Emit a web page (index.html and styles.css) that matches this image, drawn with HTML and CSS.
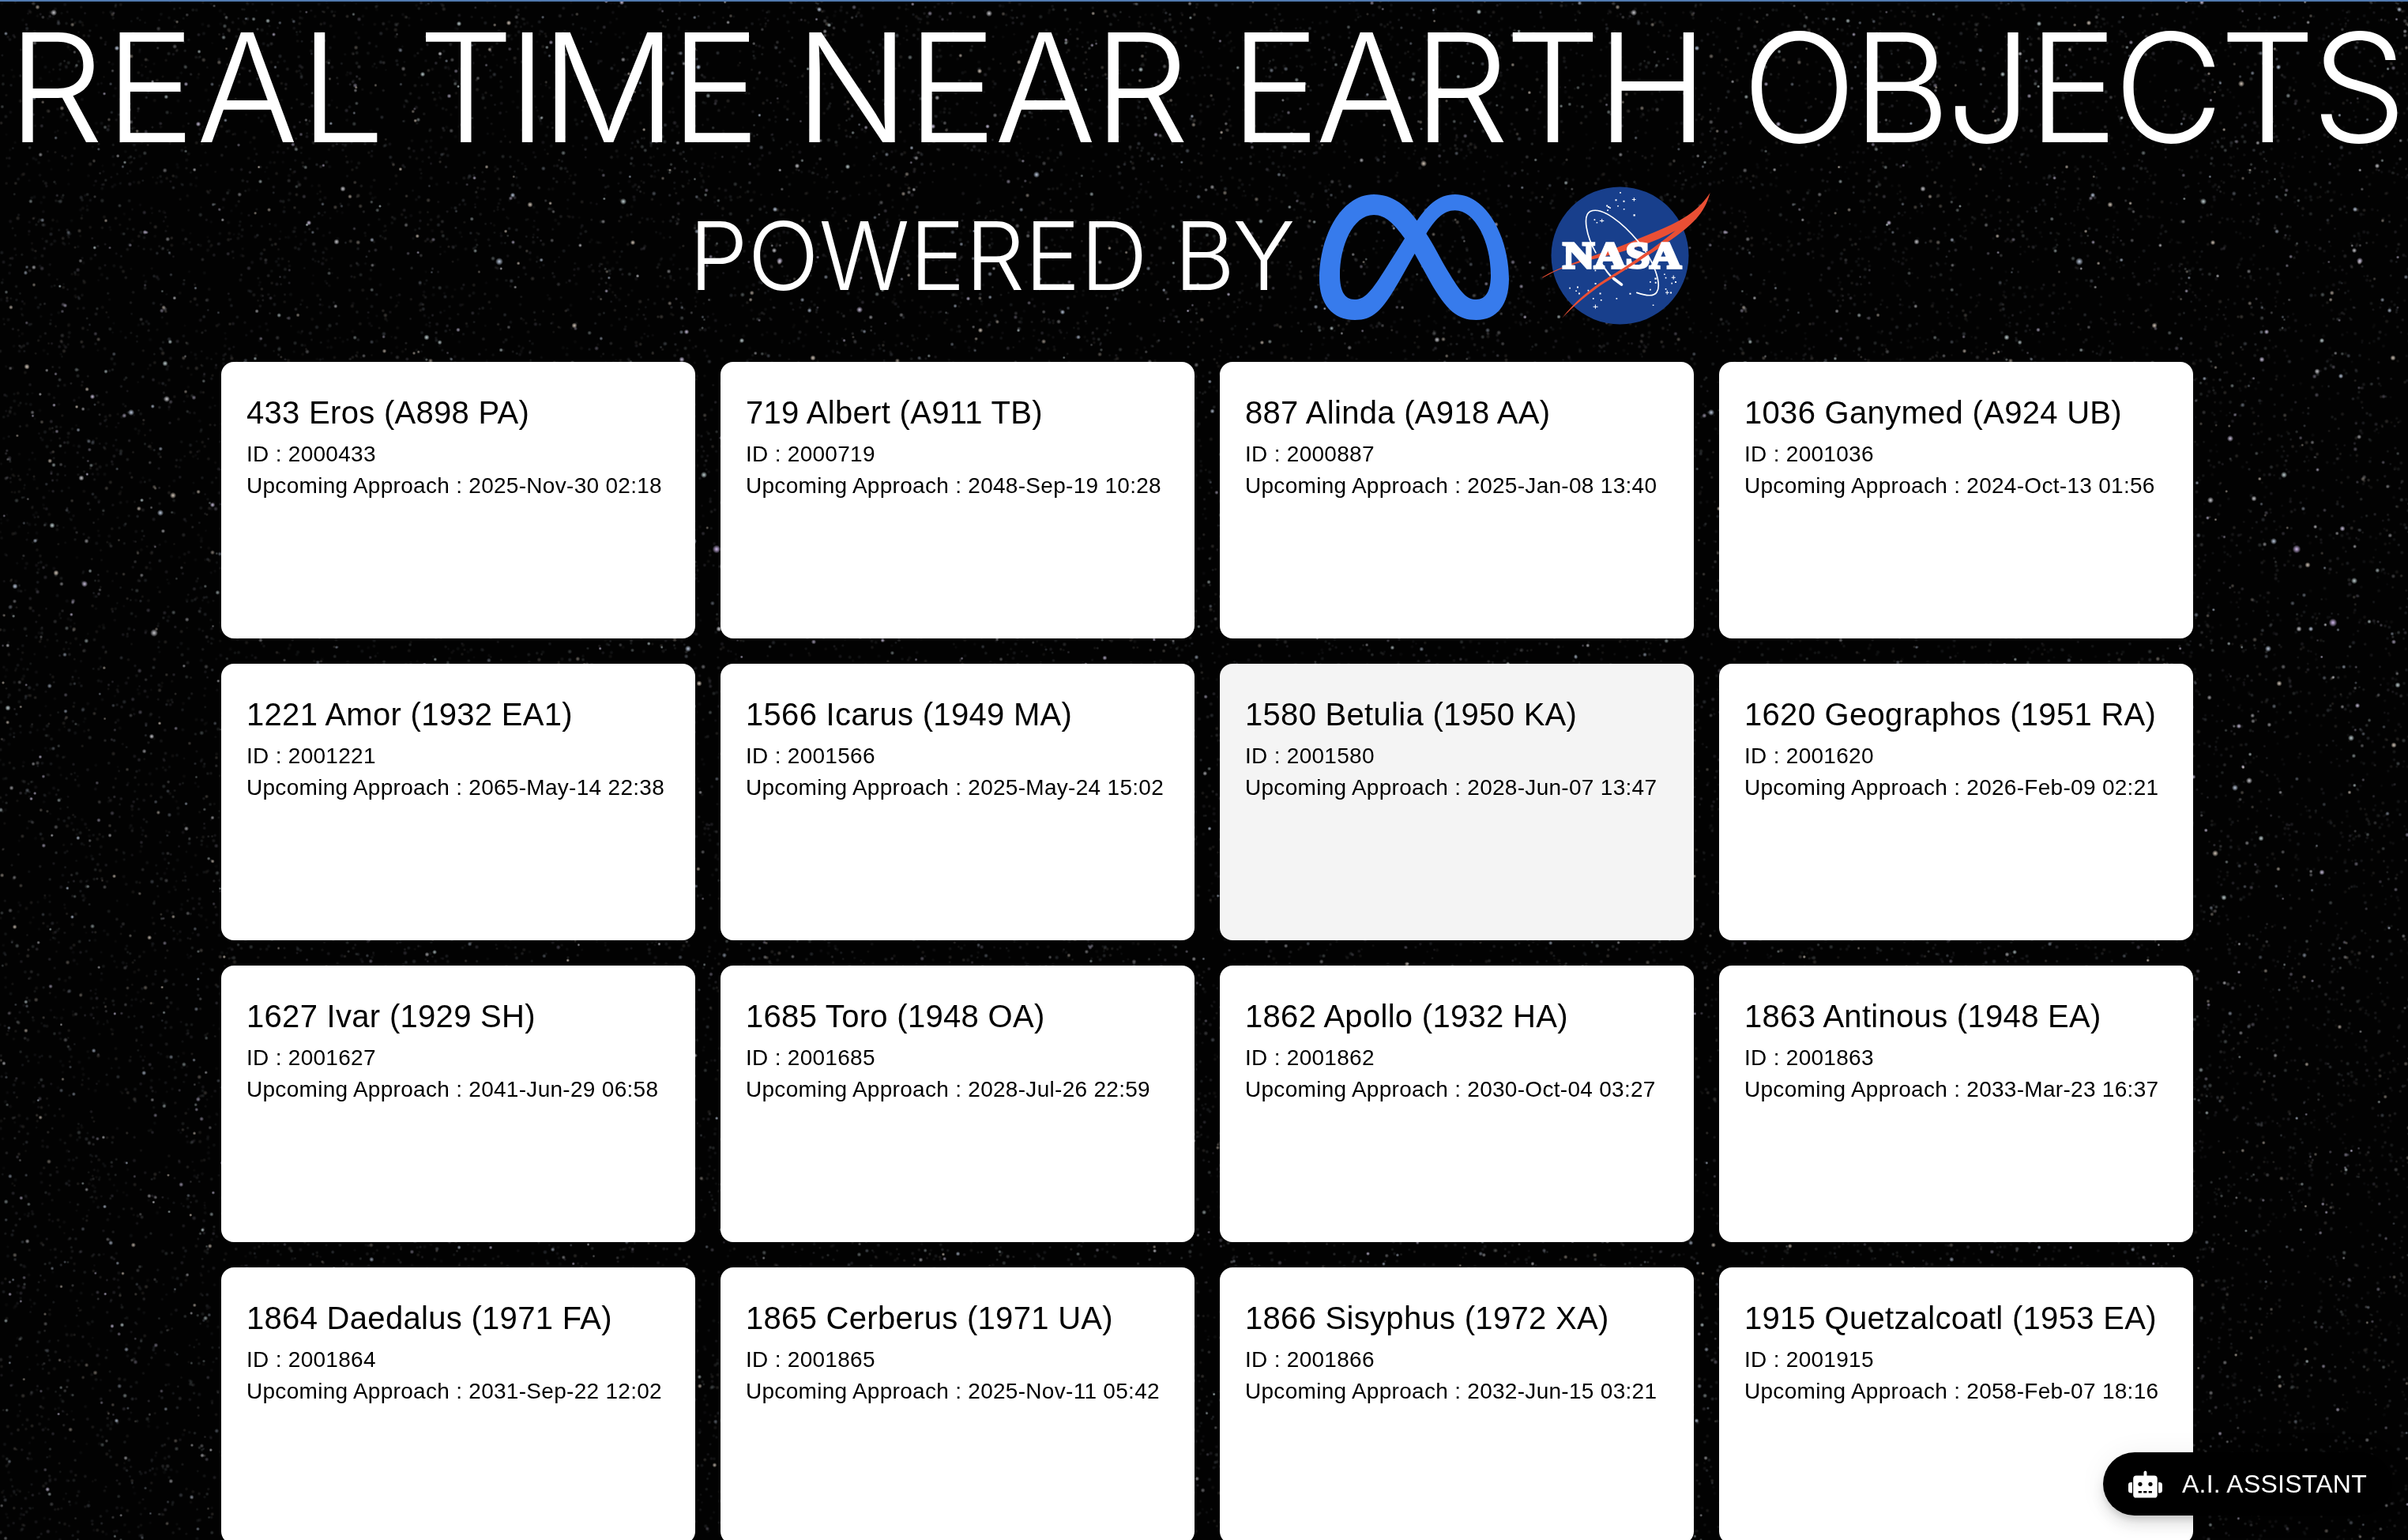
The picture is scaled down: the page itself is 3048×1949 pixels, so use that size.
FILE: index.html
```html
<!DOCTYPE html>
<html lang="en">
<head>
<meta charset="utf-8">
<title>Real Time Near Earth Objects</title>
<link rel="stylesheet" href="styles.css">
</head>
<body>
<canvas class="sky" width="3048" height="1949"></canvas>
<div class="page">
  <header class="header">
    <h1 class="title"><span class="w1">REAL</span><span class="w2">TIME</span><span class="w3">NEAR</span><span class="w4">EARTH</span><span class="w5">OBJECTS</span></h1>
    <div class="powered">
      <h2 class="powered-text"><span class="p1">POWERED</span><span class="p2">BY</span></h2>
      <svg class="meta" viewBox="0 0 240 159" aria-label="Meta"><path fill="#377bec" fill-rule="evenodd" d="M69 0C91 0 108 12 123.6 33.3C138 12 152 0 171.8 0C212 0 240 55 240 107C240 139 225 159 198.6 159C175 159 161 147 140 110L120.7 75L101 110C79 148 68 159 45 159C17 159 0 139 0 107C0 52 28 0 69 0ZM69 26C42 26 26 66 26 102C26 122 32 133 44.3 133C56 133 63 127 82 97L108 55.700C95 38 84 26 69 26ZM135.400 49.700C146 33 156 20.300 171.800 20.300C197 20.300 217 60 217 102C217 122 211 133 198.600 133C187 133 180 126 162 96C152 79 145 64 135.400 49.700Z"/></svg>
      <svg class="nasa" viewBox="36 48 640 526" aria-label="NASA">
        <circle cx="332" cy="311" r="261.500" fill="#183f8c"/>
        <path fill="#ea4f34" d="M37 393C140 332 300 296 405 246C520 198 615 165 675 72C650 165 590 205 500 270C430 318 350 366 285 407C210 455 160 500 111 549C160 487 215 440 285 396C380 340 470 275 543 216C450 268 330 300 240 322C150 342 90 365 37 396Z"/>
        <g fill="none" stroke="#fff" stroke-linecap="round">
          <path stroke-width="5" d="M240 300C205 238 188 158 219 143C262 122 342 186 402 258C462 330 492 420 472 450C461 468 425 462 396 452"/>
          <path stroke-width="6" d="M262 340C280 372 300 396 320 408"/>
          <path stroke-width="11" d="M309 399L338 421"/>
        </g>
        <text class="nasa-text" x="115" y="357" textLength="450" lengthAdjust="spacingAndGlyphs">NASA</text>
        <path fill="#ea4f34" d="M285 396C340 363 395 326 440 294L446 303C400 336 340 373 285 407Z"/>
        <g fill="#fff">
          <path d="M331 69h5v5h-5zM314 97h6v6h-6zM344 101h6v6h-6zM322 120h5v5h-5zM345 132h5v5h-5zM383 154h7v7h-7zM280 119h6v6h-6zM286 123h6v6h-6zM292 127h5v5h-5zM283 136h5v5h-5zM233 172h5v5h-5zM242 183h5v5h-5zM139 432h5v5h-5zM168 428h6v6h-6zM163 443h5v5h-5zM174 452h6v6h-6zM209 441h5v5h-5zM236 415h6v6h-6zM236 365h5v5h-5zM254 452h6v6h-6zM228 472h5v5h-5zM258 478h5v5h-5zM317 472h5v5h-5zM368 453h6v6h-6zM445 409h5v5h-5zM445 438h5v5h-5zM464 395h7v7h-7zM465 411h6v6h-6zM499 380h5v5h-5zM504 393h5v5h-5zM541 409h6v6h-6zM527 414h5v5h-5zM504 436h5v5h-5zM523 449h6v6h-6zM456 497h5v5h-5z"/>
          <path d="M378 96h14v3h-14zM384 90h3v14h-3zM255 177h16v3h-16zM262 171h3v14h-3zM230 504h18v3h-18zM237 497h3v16h-3zM528 393h15v3h-15zM534 386h3v16h-3zM505 450h14v3h-14zM510 443h3v16h-3z"/>
        </g>
      </svg>
    </div>
  </header>
  <main class="grid">
    <article class="card"><h3>433 Eros (A898 PA)</h3><p>ID : 2000433</p><p>Upcoming Approach : 2025-Nov-30 02:18</p></article>
    <article class="card"><h3>719 Albert (A911 TB)</h3><p>ID : 2000719</p><p>Upcoming Approach : 2048-Sep-19 10:28</p></article>
    <article class="card"><h3>887 Alinda (A918 AA)</h3><p>ID : 2000887</p><p>Upcoming Approach : 2025-Jan-08 13:40</p></article>
    <article class="card"><h3>1036 Ganymed (A924 UB)</h3><p>ID : 2001036</p><p>Upcoming Approach : 2024-Oct-13 01:56</p></article>
    <article class="card"><h3>1221 Amor (1932 EA1)</h3><p>ID : 2001221</p><p>Upcoming Approach : 2065-May-14 22:38</p></article>
    <article class="card"><h3>1566 Icarus (1949 MA)</h3><p>ID : 2001566</p><p>Upcoming Approach : 2025-May-24 15:02</p></article>
    <article class="card card-active"><h3>1580 Betulia (1950 KA)</h3><p>ID : 2001580</p><p>Upcoming Approach : 2028-Jun-07 13:47</p></article>
    <article class="card"><h3>1620 Geographos (1951 RA)</h3><p>ID : 2001620</p><p>Upcoming Approach : 2026-Feb-09 02:21</p></article>
    <article class="card"><h3>1627 Ivar (1929 SH)</h3><p>ID : 2001627</p><p>Upcoming Approach : 2041-Jun-29 06:58</p></article>
    <article class="card"><h3>1685 Toro (1948 OA)</h3><p>ID : 2001685</p><p>Upcoming Approach : 2028-Jul-26 22:59</p></article>
    <article class="card"><h3>1862 Apollo (1932 HA)</h3><p>ID : 2001862</p><p>Upcoming Approach : 2030-Oct-04 03:27</p></article>
    <article class="card"><h3>1863 Antinous (1948 EA)</h3><p>ID : 2001863</p><p>Upcoming Approach : 2033-Mar-23 16:37</p></article>
    <article class="card"><h3>1864 Daedalus (1971 FA)</h3><p>ID : 2001864</p><p>Upcoming Approach : 2031-Sep-22 12:02</p></article>
    <article class="card"><h3>1865 Cerberus (1971 UA)</h3><p>ID : 2001865</p><p>Upcoming Approach : 2025-Nov-11 05:42</p></article>
    <article class="card"><h3>1866 Sisyphus (1972 XA)</h3><p>ID : 2001866</p><p>Upcoming Approach : 2032-Jun-15 03:21</p></article>
    <article class="card"><h3>1915 Quetzalcoatl (1953 EA)</h3><p>ID : 2001915</p><p>Upcoming Approach : 2058-Feb-07 18:16</p></article>
  </main>
</div>
<button class="assistant" type="button">
  <svg class="robot" viewBox="72 48 132 105" aria-hidden="true"><path fill="#fff" fill-rule="evenodd" d="M138 48a6 6 0 0 1 6 6v13h29a12 12 0 0 1 12 12v62a12 12 0 0 1-12 12h-70a12 12 0 0 1-12-12v-62a12 12 0 0 1 12-12h29v-13a6 6 0 0 1 6-6zM118 92a8 8 0 1 0 0 16a8 8 0 1 0 0-16zM158 92a8 8 0 1 0 0 16a8 8 0 1 0 0-16zM111 127v7h13v-7zM131 127v7h13v-7zM151 127v7h13v-7zM87 93v41h-5a10 10 0 0 1-10-10v-21a10 10 0 0 1 10-10zM189 93h5a10 10 0 0 1 10 10v21a10 10 0 0 1-10 10h-5z"/></svg>
  <span>A.I. ASSISTANT</span>
</button>
<script src="stars.js"></script>
</body>
</html>
```
FILE: styles.css
```css
* { box-sizing: border-box; margin: 0; }
html, body { height: 1949px; overflow: hidden; }
body { background: #020202; color: #fff; font-family: "Liberation Sans", Arial, sans-serif; }
.sky { position: fixed; inset: 0; z-index: -1; border-bottom: 1px solid #333; }
.page { border-top: 2px solid #5079b0; height: 1949px; overflow: hidden; }

.header { height: 456px; font-family: Inter, sans-serif; }
.title { display: flex; font-size: 191px; line-height: 217px; font-weight: 300; padding-left: 10px; white-space: nowrap; }
.title span, .powered-text span { display: block; flex: none; }
.w1 { width: 519px; letter-spacing: 2px; }
.w2 { width: 477px; letter-spacing: -8px; }
.w3 { width: 551px; letter-spacing: -3px; }
.w4 { width: 648px; letter-spacing: -5.200px; }
.w5 { letter-spacing: -5.100px; }
.powered { display: flex; align-items: center; height: 209px; padding-left: 872px; }
.powered-text { display: flex; width: 798px; font-size: 119px; line-height: 140px; font-weight: 300; white-space: nowrap; }
.p1 { width: 614px; letter-spacing: -.300px; }
.p2 { letter-spacing: -3px; }
.meta { width: 240px; height: 159px; margin-top: 4px; }
.nasa { width: 213px; height: 175px; margin-left: 42px; }
.nasa-text { font: bold 142px "Liberation Serif", serif; fill: #fff; stroke: #fff; stroke-width: 10; }

.grid { display: grid; grid-template-columns: repeat(4, 600px); grid-auto-rows: 350px; gap: 32px; padding-left: 280px; }
.card { background: #fff; color: #000; border-radius: 16px; padding: 36px 32px; }
.card-active { background: #f4f4f4; }
.card h3 { font-size: 40px; line-height: 56px; font-weight: 400; margin-bottom: 5px; letter-spacing: .300px; white-space: nowrap; }
.card p { font-size: 28px; line-height: 40px; letter-spacing: .290px; white-space: nowrap; }

.assistant { position: fixed; right: 20px; bottom: 31px; display: flex; align-items: center; width: 366px; height: 80px; padding: 0 32px; border: 0; border-radius: 40px; background: #000; color: #fff; font: 400 32px/80px "Liberation Sans", Arial, sans-serif; letter-spacing: .250px; white-space: nowrap; box-shadow: 0 6px 10px -2px rgba(0,0,0,.14), 0 12px 20px rgba(0,0,0,.1), 0 2px 36px rgba(0,0,0,.06); }
.robot { width: 44px; height: 35px; margin-right: 25px; }
```
FILE: stars.js
```js
// Star field: a 2000px wide tile, repeated across the window.
(function () {
  var TILE = 2000;
  var canvas = document.querySelector('.sky');
  var ctx = canvas.getContext('2d');
  ctx.fillStyle = '#020202';
  ctx.fillRect(0, 0, canvas.width, canvas.height);

  var seed = 4331;
  function rnd() {
    seed = (seed * 1664525 + 1013904223) >>> 0;
    return seed / 4294967296;
  }
  var TINTS = ['214,214,220', '200,214,235', '225,212,198', '205,222,224', '215,205,235'];

  function star(x, y, r, alpha, tint) {
    for (var ox = 0; ox < canvas.width; ox += TILE) {
      var g = ctx.createRadialGradient(x + ox, y, 0, x + ox, y, r);
      g.addColorStop(0, 'rgba(' + tint + ',' + alpha + ')');
      g.addColorStop(0.45, 'rgba(' + tint + ',' + alpha * 0.6 + ')');
      g.addColorStop(1, 'rgba(' + tint + ',0)');
      ctx.fillStyle = g;
      ctx.fillRect(x + ox - r, y - r, r * 2, r * 2);
    }
  }

  for (var i = 0; i < 20000; i++) {
    star(rnd() * TILE, rnd() * 1949, 2 + rnd(), 0.04 + rnd() * 0.11, TINTS[i % 5]);
  }
  for (i = 0; i < 6000; i++) {
    star(rnd() * TILE, rnd() * 1949, 2 + rnd() * 1.2, 0.18 + Math.pow(rnd(), 2.6) * 0.65, TINTS[i % 5]);
  }

  // Brightest stars: x, y, radius
  var bright = [
    [68,16,5],[148,61,4],[644,29,4],[581,30,4],[787,3,4],[557,68,3.5],[884,85,4],[837,106,5],[535,94,4],
    [251,157,4],[434,239,4.5],[649,247,4],[671,259,4.5],[789,255,5],[391,282,4],[426,306,4.5],[632,331,6],
    [727,412,4.5],[540,427,4.5],[987,330,5],[980,317,4],[981,265,4],[801,307,4],[939,431,4],[869,420,4],
    [1252,17,5],[1037,12,4],[1240,90,4],[1444,88,4],[1181,160,4],[1009,210,4],[1312,221,5],[1802,207,5],
    [1073,211,4],[1088,392,5],[1819,430,4.5],[1345,395,4],[1241,418,4],[1872,15,4],[1250,160,3.5],
    [211,505,5],[166,522,5],[34,464,4.5],[209,460,4.5],[117,502,4],[103,605,4.5],[203,649,5],[219,627,5],
    [66,665,4.5],[107,739,5],[195,801,6],[19,742,4.5],[71,725,4.5],[10,896,4.5],[269,639,4],[192,932,4],
    [907,695,6.5],[953,788,6.5],[891,601,5],[823,555,5],[798,633,5],[878,685,5],[921,715,4.5],[980,735,5],
    [965,669,4.5],[853,631,4.5],[871,821,5],[885,865,4.5],[976,934,5],[834,919,4],[847,988,5],
    [829,997,5],[804,1080,5],[862,1061,4.5],[984,893,4],[910,796,4.5],[925,796,4],[1030,943,4.5],[1035,867,4.5],
    [863,455,4.5],[933,470,4.5],[963,476,4],[1029,453,4.5],[815,1136,4.5],[939,1104,4.5]
  ];
  bright.forEach(function (s, n) {
    star(s[0], s[1], s[2] * 0.82, 0.92, s[2] > 6 ? '225,200,255' : TINTS[n % 5]);
  });
})();
```
